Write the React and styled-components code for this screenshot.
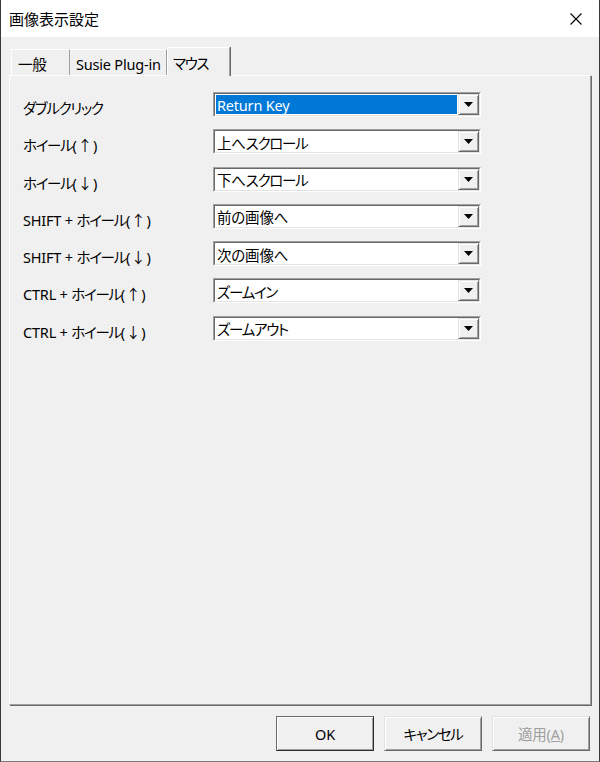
import React from "react";
import styled, { createGlobalStyle } from "styled-components";

const Global = createGlobalStyle`
  html, body { margin: 0; padding: 0; background: #f0f0f0; }
  body {
    font-family: "Noto Sans", "Noto Sans CJK JP", sans-serif;
    font-feature-settings: "palt";
  }
`;

const Window = styled.div`
  width: 600px;
  height: 762px;
  box-sizing: border-box;
  display: flex;
  flex-direction: column;
  background: #f0f0f0;
  border-left: 1px solid #3a3a3a;
  border-right: 1px solid #3a3a3a;
  border-bottom: 1px solid #7a7a7a;
  font-size: 14.5px;
  letter-spacing: -0.2px;
  color: #000;
`;

const TitleBar = styled.div`
  height: 37px;
  flex: none;
  background: #fff;
  display: flex;
  align-items: center;
  justify-content: space-between;
  padding-left: 8px;
  font-size: 15px;
  letter-spacing: 0;
`;

const CloseBtn = styled.div`
  width: 46px;
  height: 37px;
  display: flex;
  align-items: center;
  justify-content: center;
`;

const Body = styled.div`
  flex: 1;
  display: flex;
  flex-direction: column;
  padding: 10px 8px 0 8px;
`;

const TabRow = styled.div`
  display: flex;
  align-items: flex-end;
  padding-left: 2px;
  height: 28px;
  position: relative;
  z-index: 1;
`;

const Tab = styled.div`
  box-sizing: border-box;
  height: ${(p) => (p.$active ? "29px" : "26px")};
  margin-bottom: ${(p) => (p.$active ? "-1px" : "0")};
  padding: 0 0 0 ${(p) => p.$pad}px;
  padding-top: ${(p) => (p.$active ? "0" : "2px")};
  display: flex;
  align-items: center;
  background: #f0f0f0;
  border-top: 1px solid #fff;
  border-left: ${(p) => (p.$noLeft ? "none" : "1px solid #fff")};
  border-right: 1px solid #a0a0a0;
  box-shadow: 1px 0 0 #696969;
  width: ${(p) => p.$w}px;
  white-space: nowrap;
`;

const Panel = styled.div`
  box-sizing: border-box;
  height: 630px;
  border-top: 1px solid #fff;
  border-left: 1px solid #fff;
  border-right: 1px solid #a0a0a0;
  border-bottom: 1px solid #a0a0a0;
  box-shadow: 1px 1px 0 #696969;
  padding: 16px 0 0 13px;
`;

const Grid = styled.div`
  display: grid;
  grid-template-columns: 190px 268px;
  grid-auto-rows: 25px;
  row-gap: 12.3px;
`;

const Label = styled.div`
  display: flex;
  align-items: center;
  padding-top: 6px;
  white-space: nowrap;
`;

const Combo = styled.div`
  box-sizing: border-box;
  height: 25px;
  display: flex;
  align-items: stretch;
  background: #fff;
  border-top: 1px solid #a0a0a0;
  border-left: 1px solid #a0a0a0;
  border-right: 1px solid #fff;
  border-bottom: 1px solid #fff;
`;

const ComboInner = styled.div`
  flex: 1;
  display: flex;
  align-items: stretch;
  border-top: 1px solid #696969;
  border-left: 1px solid #696969;
  border-right: 1px solid #e3e3e3;
  border-bottom: 1px solid #e3e3e3;
`;

const Value = styled.div`
  flex: 1;
  display: flex;
  align-items: center;
  margin: 1px;
  padding-left: 1px;
  padding-top: 1px;
  background: ${(p) => (p.$selected ? "#0078d7" : "#fff")};
  color: ${(p) => (p.$selected ? "#fff" : "#000")};
  white-space: nowrap;
`;

const DropBtn = styled.div`
  box-sizing: border-box;
  width: 21px;
  display: flex;
  align-items: center;
  justify-content: center;
  background: #f0f0f0;
  border-top: 1px solid #e3e3e3;
  border-left: 1px solid #e3e3e3;
  border-right: 1px solid #696969;
  border-bottom: 1px solid #696969;
  box-shadow: inset 1px 1px 0 #fff, inset -1px -1px 0 #a0a0a0;
`;

const Footer = styled.div`
  display: flex;
  justify-content: flex-end;
  gap: 10px;
  padding: 11px 1px 0 0;
`;

const Button = styled.div`
  box-sizing: border-box;
  width: 98px;
  height: 35px;
  display: flex;
  align-items: center;
  justify-content: center;
  background: #f0f0f0;
  border-top: 1px solid ${(p) => (p.$default ? "#6a6a6a" : "#e3e3e3")};
  border-left: 1px solid ${(p) => (p.$default ? "#6a6a6a" : "#e3e3e3")};
  border-right: 1px solid ${(p) => (p.$default ? "#2c2c2c" : "#696969")};
  border-bottom: 1px solid ${(p) => (p.$default ? "#2c2c2c" : "#696969")};
  box-shadow: inset 1px 1px 0 #fff, inset -1px -1px 0 #a0a0a0;
  color: ${(p) => (p.$disabled ? "#a0a0a0" : "#000")};
`;

const Under = styled.span`
  text-decoration: underline;
`;

const Kana = styled.span`
  letter-spacing: -1.3px;
`;

const Wide = styled.span`
  font-family: "Noto Sans CJK JP", sans-serif;
  padding: 0 1px;
`;

function JText({ text }) {
  const parts = text.split(/([\u30A0-\u30FF]+|[↑↓])/).filter(Boolean);
  return (
    <span>
      {parts.map((s, i) => {
        if (/^[↑↓]$/.test(s)) return <Wide key={i}>{s}</Wide>;
        if (/^[\u30A0-\u30FF]+$/.test(s)) return <Kana key={i}>{s}</Kana>;
        return <React.Fragment key={i}>{s}</React.Fragment>;
      })}
    </span>
  );
}

const Triangle = () => (
  <svg width="9" height="5" viewBox="0 0 9 5">
    <polygon points="0,0 9,0 4.5,5" fill="#000" />
  </svg>
);

const rows = [
  ["ダブルクリック", "Return Key", true],
  ["ホイール(↑)", "上へスクロール"],
  ["ホイール(↓)", "下へスクロール"],
  ["SHIFT + ホイール(↑)", "前の画像へ"],
  ["SHIFT + ホイール(↓)", "次の画像へ"],
  ["CTRL + ホイール(↑)", "ズームイン"],
  ["CTRL + ホイール(↓)", "ズームアウト"],
];

export default function App() {
  return (
    <>
      <Global />
      <Window>
        <TitleBar>
          <span>画像表示設定</span>
          <CloseBtn>
            <svg width="12" height="12" viewBox="0 0 12 12">
              <path d="M0.5 0.5 L11.5 11.5 M11.5 0.5 L0.5 11.5" stroke="#000" strokeWidth="1.1" />
            </svg>
          </CloseBtn>
        </TitleBar>
        <Body>
          <TabRow>
            <Tab $w={59} $pad={6}>一般</Tab>
            <Tab $w={97} $pad={6} $noLeft>Susie Plug-in</Tab>
            <Tab $active $w={63} $pad={5}>
              <JText text="マウス" />
            </Tab>
          </TabRow>
          <Panel>
            <Grid>
              {rows.map(([label, value, sel]) => (
                <React.Fragment key={label}>
                  <Label>
                    <JText text={label} />
                  </Label>
                  <Combo>
                    <ComboInner>
                      <Value $selected={sel}>
                        <JText text={value} />
                      </Value>
                      <DropBtn>
                        <Triangle />
                      </DropBtn>
                    </ComboInner>
                  </Combo>
                </React.Fragment>
              ))}
            </Grid>
          </Panel>
          <Footer>
            <Button $default>OK</Button>
            <Button>
              <JText text="キャンセル" />
            </Button>
            <Button $disabled>
              適用(<Under>A</Under>)
            </Button>
          </Footer>
        </Body>
      </Window>
    </>
  );
}
